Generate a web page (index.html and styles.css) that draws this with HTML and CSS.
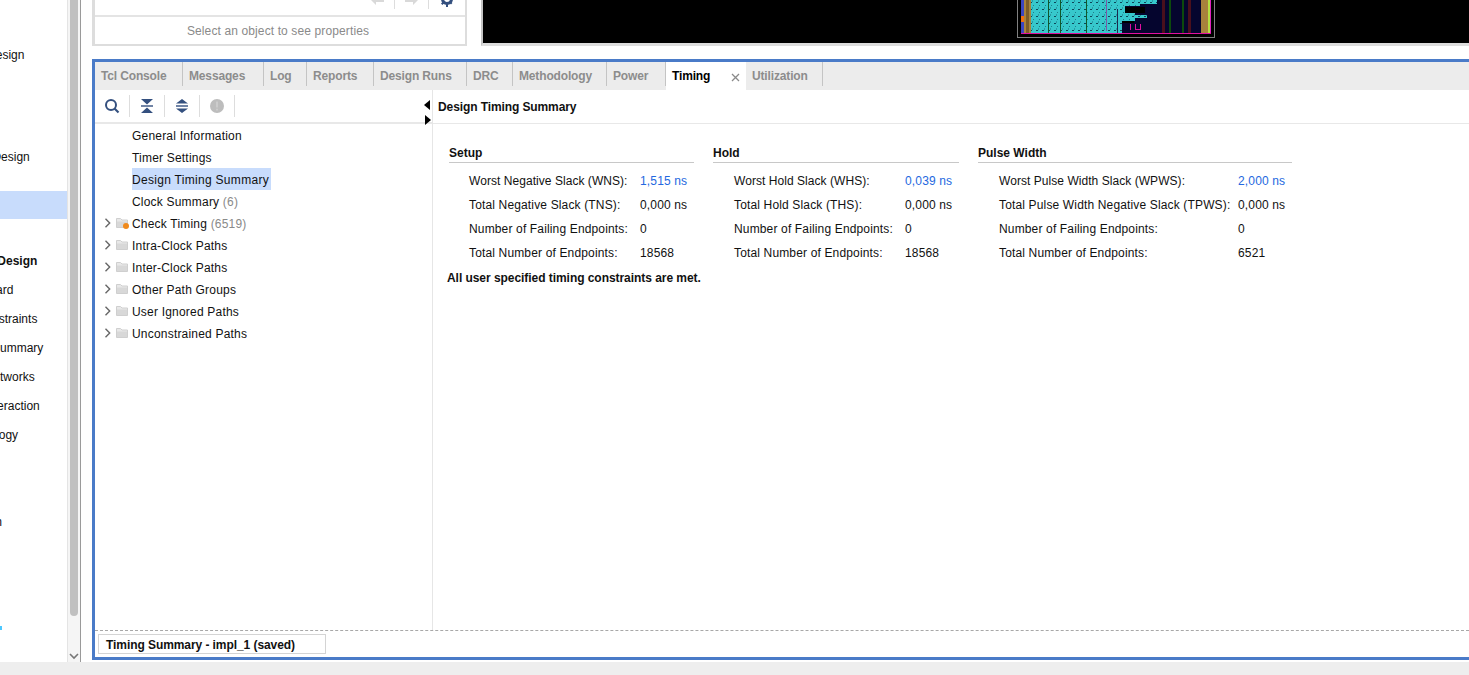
FILE: index.html
```
<!DOCTYPE html>
<html lang="en">

<head>
    <meta charset="UTF-8">
    <meta name="viewport" content="width=device-width, initial-scale=1.0">
    <title>Design Timing Summary</title>
    <link rel="stylesheet" href="styles.css">
</head>

<body>
    <svg class="defs" width="0" height="0">
        <symbol id="chevron" viewBox="0 0 8 10">
            <path d="M1.500 .8 5.700 5 1.500 9.200" fill="none" stroke="#666" stroke-width="1.400"/>
        </symbol>
        <symbol id="folder" viewBox="0 0 12 10">
            <path d="M.5 .5h4l1.500 1.500h5.500v7.500H.5z" fill="#e8e8e8" stroke="#cfcfcf"/>
            <path d="M1 3.500h10V9H1z" fill="#d8d8d8"/>
        </symbol>
    </svg>

    <div class="app">
        <nav class="nav">
            <div class="nav-list">
                <div class="nav-row nav-first">Open Elaborated Design</div>
                <div class="nav-row nav-second">Open Synthesized Design</div>
                <div class="nav-row nav-selected"></div>
                <div class="nav-row nav-bold nav-group">Open Implemented Design</div>
                <div class="nav-row nav-wizard">Constraints Wizard</div>
                <div class="nav-row nav-constraints">Edit Timing Constraints</div>
                <div class="nav-row nav-summary">Report Timing Summary</div>
                <div class="nav-row nav-networks">Report Clock Networks</div>
                <div class="nav-row nav-interaction">Report Clock Interaction</div>
                <div class="nav-row nav-methodology">Report Methodology</div>
                <div class="nav-row nav-last">Generate Bitstream</div>
                <div class="nav-sliver"></div>
            </div>
            <div class="scrollbar">
                <div class="scroll-thumb"></div>
                <svg class="scroll-down" width="10" height="7" viewBox="0 0 10 7">
                    <path d="M1 1l4 4 4-4" fill="none" stroke="#777" stroke-width="1.600"/>
                </svg>
            </div>
        </nav>

        <main class="main">
            <div class="top-row">
                <section class="props">
                    <div class="props-tools">
                        <svg class="tool-arrow" width="16" height="16" viewBox="0 0 16 16">
                            <path d="M1 8l6-6v3h8v6H7v3z" fill="#d9d9d9"/>
                        </svg>
                        <span class="props-sep"></span>
                        <svg class="tool-arrow tool-next" width="16" height="16" viewBox="0 0 16 16">
                            <path d="M15 8L9 2v3H1v6h8v3z" fill="#d9d9d9"/>
                        </svg>
                        <span class="props-sep"></span>
                        <svg class="tool-gear" width="16" height="16" viewBox="0 0 16 16">
                            <circle cx="8" cy="8" r="4.500" fill="none" stroke="#34507f" stroke-width="3"/>
                            <path d="M7 0h2v3H7zM7 13h2v3H7zM0 7h3v2H0zM13 7h3v2h-3zM2 3.400 3.400 2l2 2L4 5.400zM12 10.600 13.400 12 12 13.400l-2-2zM2 12.600l2-2 1.400 1.400-2 2zM10.600 4l2-2L14 3.400l-2 2z" fill="#34507f"/>
                        </svg>
                    </div>
                    <div class="props-hint">Select an object to see properties</div>
                </section>
                <section class="device">
                    <div class="device-view">
                        <svg class="device-map" width="198" height="38" viewBox="0 0 198 38" shape-rendering="crispEdges">
                            <defs>
                                <pattern id="sites" width="6" height="7" patternUnits="userSpaceOnUse">
                                    <rect x="1" y="2" width="2" height="1" fill="#0e4658"/>
                                    <rect x="4" y="5" width="1" height="1" fill="#1c7f8a"/>
                                    <rect x="3" y="0" width="1" height="2" fill="#2a9aa5"/>
                                </pattern>
                            </defs>
                            <rect x=".5" y="-2" width="197" height="39.500" fill="none" stroke="#808080"/>
                            <rect x="4" y="0" width="190" height="33" fill="#05052e"/>
                            <rect x="145" y="0" width="3" height="33" fill="#4a0f1c"/>
                            <rect x="152" y="0" width="2" height="33" fill="#0c4a0c"/>
                            <rect x="165" y="0" width="2" height="33" fill="#0c4a0c"/>
                            <rect x="171" y="0" width="3" height="33" fill="#4a0f1c"/>
                            <path d="M106 7h22v6h-22zM105 21h12v2h-12z" fill="#000"/>
                            <path d="M14 0H140V4H123V6H108V13H118V15H130V18H118V21H105V33H14z" fill="#37c8cc"/>
                            <path d="M14 0H140V4H123V6H108V13H118V15H130V18H118V21H105V33H14z" fill="url(#sites)"/>
                            <rect x="31" y="0" width="1" height="33" fill="#0f5a2c"/>
                            <rect x="43" y="0" width="1" height="33" fill="#0f5a2c"/>
                            <rect x="69" y="0" width="1" height="33" fill="#0f5a2c"/>
                            <rect x="89" y="0" width="1" height="31" fill="#7a5aa8"/>
                            <rect x="100" y="9" width="1" height="24" fill="#1a2a50"/>
                            <rect x="4" y="0" width="3" height="33" fill="#3a46c0"/>
                            <rect x="4" y="16" width="3" height="6" fill="#f07010"/>
                            <rect x="7" y="0" width="7" height="33" fill="#a8823c"/>
                            <rect x="9" y="0" width="3" height="33" fill="#7c5c28"/>
                            <rect x="184" y="0" width="7" height="33" fill="#a8823c"/>
                            <rect x="191" y="0" width="2" height="33" fill="#b4e040"/>
                            <rect x="193" y="0" width="1" height="33" fill="#e020c0"/>
                            <rect x="4" y="33" width="190" height="1" fill="#e010a0"/>
                            <path d="M113 24h1v6h-1zM118 24h1v5h4v-5h1v6h-6z" fill="#e010a0"/>
                        </svg>
                    </div>
                </section>
            </div>

            <section class="panel">
                <div class="tabs">
                    <div class="tab">Tcl Console</div>
                    <div class="tab">Messages</div>
                    <div class="tab">Log</div>
                    <div class="tab">Reports</div>
                    <div class="tab">Design Runs</div>
                    <div class="tab">DRC</div>
                    <div class="tab">Methodology</div>
                    <div class="tab">Power</div>
                    <div class="tab tab-active">
                        <span>Timing</span>
                        <svg width="9" height="9" viewBox="0 0 9 9">
                            <path d="M1 1l7 7M8 1L1 8" stroke="#8a8a8a" stroke-width="1.300"/>
                        </svg>
                    </div>
                    <div class="tab">Utilization</div>
                </div>

                <div class="panel-body">
                    <aside class="tree">
                        <div class="tree-tools">
                            <span class="tool">
                                <svg width="16" height="16" viewBox="0 0 16 16">
                                    <circle cx="7" cy="7" r="5" fill="none" stroke="#34507f" stroke-width="2"/>
                                    <path d="M10.500 10.500l4 4" stroke="#34507f" stroke-width="2.200"/>
                                </svg>
                            </span>
                            <span class="tool">
                                <svg width="14" height="14" viewBox="0 0 14 14">
                                    <path d="M1 0h12L7 5.500zM1 14h12L7 8.500z" fill="#34507f"/>
                                    <path d="M1 6.300h12v1.400H1z" fill="#34507f"/>
                                </svg>
                            </span>
                            <span class="tool">
                                <svg width="14" height="14" viewBox="0 0 14 14">
                                    <path d="M7 0l6 4.500H1zM7 14l-6-4.500h12z" fill="#34507f"/>
                                    <path d="M1 6h12v2H1z" fill="#6f83a6"/>
                                </svg>
                            </span>
                            <span class="tool">
                                <svg width="16" height="16" viewBox="0 0 16 16">
                                    <circle cx="8" cy="8" r="7" fill="#bdbdbd"/>
                                    <path d="M7.200 3.500h1.600v6H7.200zM7.200 10.800h1.600v1.700H7.200z" fill="#d0d0d0"/>
                                </svg>
                            </span>
                        </div>
                        <ul class="tree-list">
                            <li class="tree-row"><span class="tree-label">General Information</span></li>
                            <li class="tree-row"><span class="tree-label">Timer Settings</span></li>
                            <li class="tree-row"><span class="tree-label tree-selected">Design Timing Summary</span></li>
                            <li class="tree-row"><span class="tree-label">Clock Summary <span class="count">(6)</span></span></li>
                            <li class="tree-row tree-parent">
                                <svg class="chevron"><use href="#chevron"/></svg>
                                <span class="folder">
                                    <svg width="12" height="10"><use href="#folder"/></svg>
                                    <span class="folder-dot"></span>
                                </span>
                                <span class="tree-label">Check Timing <span class="count">(6519)</span></span>
                            </li>
                            <li class="tree-row tree-parent">
                                <svg class="chevron"><use href="#chevron"/></svg>
                                <span class="folder"><svg width="12" height="10"><use href="#folder"/></svg></span>
                                <span class="tree-label">Intra-Clock Paths</span>
                            </li>
                            <li class="tree-row tree-parent">
                                <svg class="chevron"><use href="#chevron"/></svg>
                                <span class="folder"><svg width="12" height="10"><use href="#folder"/></svg></span>
                                <span class="tree-label">Inter-Clock Paths</span>
                            </li>
                            <li class="tree-row tree-parent">
                                <svg class="chevron"><use href="#chevron"/></svg>
                                <span class="folder"><svg width="12" height="10"><use href="#folder"/></svg></span>
                                <span class="tree-label">Other Path Groups</span>
                            </li>
                            <li class="tree-row tree-parent">
                                <svg class="chevron"><use href="#chevron"/></svg>
                                <span class="folder"><svg width="12" height="10"><use href="#folder"/></svg></span>
                                <span class="tree-label">User Ignored Paths</span>
                            </li>
                            <li class="tree-row tree-parent">
                                <svg class="chevron"><use href="#chevron"/></svg>
                                <span class="folder"><svg width="12" height="10"><use href="#folder"/></svg></span>
                                <span class="tree-label">Unconstrained Paths</span>
                            </li>
                        </ul>
                        <span class="split-left"></span>
                        <span class="split-right"></span>
                    </aside>

                    <div class="detail">
                        <h2 class="detail-title">Design Timing Summary</h2>
                        <div class="summary">
                            <div class="summary-col">
                                <h3 class="col-title">Setup</h3>
                                <div class="stat"><span>Worst Negative Slack (WNS):</span><span class="link">1,515 ns</span></div>
                                <div class="stat"><span>Total Negative Slack (TNS):</span><span>0,000 ns</span></div>
                                <div class="stat"><span>Number of Failing Endpoints:</span><span>0</span></div>
                                <div class="stat"><span>Total Number of Endpoints:</span><span>18568</span></div>
                            </div>
                            <div class="summary-col">
                                <h3 class="col-title">Hold</h3>
                                <div class="stat"><span>Worst Hold Slack (WHS):</span><span class="link">0,039 ns</span></div>
                                <div class="stat"><span>Total Hold Slack (THS):</span><span>0,000 ns</span></div>
                                <div class="stat"><span>Number of Failing Endpoints:</span><span>0</span></div>
                                <div class="stat"><span>Total Number of Endpoints:</span><span>18568</span></div>
                            </div>
                            <div class="summary-col col-wide">
                                <h3 class="col-title">Pulse Width</h3>
                                <div class="stat"><span>Worst Pulse Width Slack (WPWS):</span><span class="link">2,000 ns</span></div>
                                <div class="stat"><span>Total Pulse Width Negative Slack (TPWS):</span><span>0,000 ns</span></div>
                                <div class="stat"><span>Number of Failing Endpoints:</span><span>0</span></div>
                                <div class="stat"><span>Total Number of Endpoints:</span><span>6521</span></div>
                            </div>
                        </div>
                        <p class="met">All user specified timing constraints are met.</p>
                    </div>
                </div>

                <div class="status-strip">
                    <div class="status-tab">Timing Summary - impl_1 (saved)</div>
                </div>
            </section>
        </main>
    </div>

    <div class="footer"></div>
</body>

</html>
```

FILE: styles.css
```
* {
    box-sizing: border-box;
}

html,
body {
    margin: 0;
    height: 675px;
    overflow: hidden;
}

body {
    font-family: "Liberation Sans", Arial, sans-serif;
    font-size: 12px;
    color: #111;
    background-color: #fff;
}

.defs {
    position: absolute;
}

.app {
    display: flex;
    height: 662px;
}

.footer {
    height: 13px;
    background-color: #eeeeee;
}

/* left navigator, mostly scrolled out of view */
.nav {
    display: flex;
    width: 81px;
    flex-shrink: 0;
}

.nav-list {
    width: 67px;
    overflow: hidden;
    position: relative;
}

.nav-row {
    height: 29px;
    line-height: 29px;
    margin-left: -85px;
    white-space: nowrap;
}

.nav-first {
    margin-top: 41px;
    margin-left: -107px;
}

.nav-second {
    margin-top: 73px;
    margin-left: -109px;
}

.nav-selected {
    height: 28px;
    margin-top: 19px;
    margin-left: 0;
    background-color: #c8dcfc;
}

.nav-bold {
    font-weight: bold;
    margin-left: -114px;
}

.nav-group {
    margin-top: 28px;
}

.nav-wizard {
    margin-left: -88px;
}

.nav-constraints,
.nav-summary {
    margin-left: -86px;
}

.nav-networks {
    margin-left: -88px;
}

.nav-interaction {
    margin-left: -89px;
}

.nav-methodology {
    margin-left: -90px;
}

.nav-last {
    margin-top: 58px;
    margin-left: -102px;
}

.nav-sliver {
    position: absolute;
    left: 0;
    top: 626px;
    width: 2px;
    height: 4px;
    background-color: #4cc8ff;
}

.scrollbar {
    width: 14px;
    position: relative;
    background-color: #f5f5f5;
    border-left: 1px solid #e4e4e4;
    border-right: 1px solid #9a9a9a;
}

.scroll-thumb {
    width: 8px;
    height: 616px;
    margin-left: 2px;
    background-color: #c0c0c0;
    border-radius: 0 0 4px 4px;
}

.scroll-down {
    position: absolute;
    left: 1px;
    top: 653px;
}

.main {
    flex: 1;
    min-width: 0;
    margin-left: 11px;
}

/* top row */
.top-row {
    display: flex;
    height: 46px;
    margin-bottom: 13px;
}

.props {
    width: 375px;
    border: 3px solid #dddddd;
    border-top: none;
    border-right-width: 2px;
    border-bottom-width: 2px;
}

.props-tools {
    display: flex;
    justify-content: flex-end;
    height: 17px;
    padding-right: 10px;
    overflow: hidden;
    border-bottom: 2px solid #e4e4e4;
}

.tool-arrow {
    margin: -9px 9px 0 9px;
}

.tool-next {
    margin-right: 8px;
}

.tool-gear {
    margin: -9px 0 0 10px;
}

.props-sep {
    width: 1px;
    height: 9px;
    background-color: #dddddd;
}

.props-hint {
    height: 27px;
    line-height: 28px;
    padding-right: 4px;
    text-align: center;
    letter-spacing: .12px;
    color: #8a8a8a;
}

.device {
    flex: 1;
    margin-left: 14px;
    border-left: 2px solid #c4c4c4;
    border-bottom: 3px solid #dddddd;
    background-color: #000;
}

.device-view {
    padding-left: 534px;
    height: 43px;
}

.device-map {
    display: block;
}

/* timing panel */
.panel {
    display: flex;
    flex-direction: column;
    height: 601px;
    border: 3px solid #4a7bc8;
    border-right: none;
}

.tabs {
    display: grid;
    grid-template-columns: 88px 81px 43px 67px 93px 46px 94px 59px 80px 77px;
    height: 28px;
    background-color: #ececec;
    flex-shrink: 0;
}

.tab {
    height: 24px;
    line-height: 29px;
    padding-left: 6px;
    font-weight: bold;
    letter-spacing: -.15px;
    color: #8c8c8c;
    border-right: 1px solid #c4c4c4;
    white-space: nowrap;
}

.tab-active {
    display: flex;
    height: 28px;
    padding: 0 6px;
    justify-content: space-between;
    align-items: center;
    line-height: normal;
    color: #000;
    background-color: #fff;
    border-right: none;
}

.tab-active svg {
    margin-top: 2px;
}

.panel-body {
    display: flex;
    flex: 1;
    min-height: 0;
}

.tree {
    position: relative;
    width: 338px;
    flex-shrink: 0;
    border-right: 1px solid #e6e6e6;
}

.tree-tools {
    display: flex;
    align-items: center;
    height: 34px;
    border-bottom: 2px solid #e8e8e8;
}

.tool {
    display: flex;
    align-items: center;
    justify-content: center;
    width: 35px;
    height: 22px;
    border-right: 1px solid #dddddd;
}

.tree-list {
    list-style: none;
    margin: 0;
    padding: 0;
}

.tree-row {
    display: flex;
    align-items: center;
    height: 22px;
    padding-left: 37px;
}

.tree-parent {
    padding-left: 9px;
}

.chevron {
    width: 8px;
    height: 10px;
}

.folder {
    position: relative;
    display: flex;
    width: 12px;
    margin-left: 4px;
    margin-right: 4px;
}

.folder-dot {
    position: absolute;
    right: -1px;
    bottom: -1px;
    width: 6px;
    height: 6px;
    border-radius: 50%;
    background-color: #f08a1c;
}

.tree-label {
    height: 22px;
    line-height: 24px;
    letter-spacing: .2px;
}

.tree-selected {
    background-color: #c8dcfc;
    padding-right: 2px;
    letter-spacing: .3px;
}

.count {
    color: #8a8a8a;
}

.split-left,
.split-right {
    position: absolute;
    width: 0;
    height: 0;
    border-top: 5px solid transparent;
    border-bottom: 5px solid transparent;
}

.split-left {
    left: 329px;
    top: 10px;
    border-right: 6px solid #000;
}

.split-right {
    left: 330px;
    top: 25px;
    border-left: 6px solid #000;
}

.detail {
    flex: 1;
    min-width: 0;
}

.detail-title {
    margin: 0;
    height: 34px;
    line-height: 35px;
    padding-left: 5px;
    font-size: 12px;
    letter-spacing: -.1px;
    border-bottom: 1px solid #e8e8e8;
}

.summary {
    display: grid;
    grid-template-columns: 245px 246px 314px;
    column-gap: 19px;
    margin: 19px 0 0 16px;
}

.col-title {
    margin: 0 0 5px;
    height: 20px;
    line-height: 20px;
    font-size: 12px;
    border-bottom: 1px solid #c8c8c8;
}

.stat {
    display: grid;
    grid-template-columns: 171px auto;
    height: 24px;
    line-height: 26px;
    padding-left: 21px;
    letter-spacing: .15px;
    white-space: nowrap;
}

.col-title + .stat span:first-child {
    letter-spacing: .05px;
}

.summary-col:first-child .stat {
    padding-left: 20px;
}

.col-wide .stat {
    grid-template-columns: 239px auto;
}

.link {
    color: #2468e0;
}

.met {
    margin: 5px 0 0 14px;
    line-height: 18px;
    font-weight: bold;
    letter-spacing: -.05px;
}

.status-strip {
    height: 27px;
    flex-shrink: 0;
    padding: 3px 0 0 3px;
    border-top: 1px dashed #a8a8a8;
}

.status-tab {
    width: 228px;
    height: 20px;
    line-height: 20px;
    padding-left: 7px;
    font-weight: bold;
    letter-spacing: -.07px;
    border: 1px solid #d4d4d4;
}
```
